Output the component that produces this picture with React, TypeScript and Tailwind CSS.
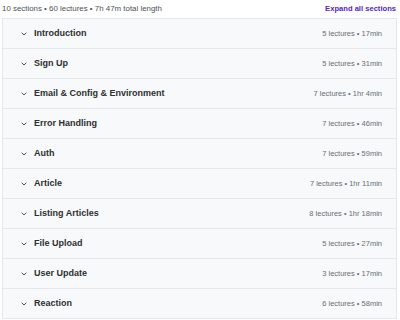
import { ChevronDown } from "lucide-react";

const sections = [
  { title: "Introduction", meta: "5 lectures • 17min" },
  { title: "Sign Up", meta: "5 lectures • 31min" },
  { title: "Email & Config & Environment", meta: "7 lectures • 1hr 4min" },
  { title: "Error Handling", meta: "7 lectures • 46min" },
  { title: "Auth", meta: "7 lectures • 59min" },
  { title: "Article", meta: "7 lectures • 1hr 11min" },
  { title: "Listing Articles", meta: "8 lectures • 1hr 18min" },
  { title: "File Upload", meta: "5 lectures • 27min" },
  { title: "User Update", meta: "3 lectures • 17min" },
  { title: "Reaction", meta: "6 lectures • 58min" },
];

export default function App() {
  return (
    <div
      className="w-[400px] h-[320px] bg-white overflow-hidden"
      style={{ fontFamily: '"Liberation Sans", Arial, sans-serif' }}
    >
      {/* Summary line */}
      <div className="flex items-center justify-between h-[18px] pl-[2px] pr-[4px]">
        <span className="text-[7.9px] text-[#4d5156]">10 sections • 60 lectures • 7h 47m total length</span>
        <button className="text-[7.6px] font-bold text-[#5624d0]">Expand all sections</button>
      </div>

      {/* Accordion */}
      <div className="ml-[2px] w-[395px] border border-[#e4e8eb]">
        {sections.map((s, i) => (
          <div
            key={s.title}
            className={`flex items-center bg-[#f7f9fa] pl-[17px] pr-[14px] ${
              i > 0 ? "h-[30px] border-t border-[#e4e8eb]" : "h-[29px]"
            }`}
          >
            <ChevronDown className="w-[8px] h-[8px] text-[#2d2f31]" strokeWidth={2.5} />
            <span className="ml-[6px] text-[9px] font-bold text-[#2d2f31]">{s.title}</span>
            <span className="ml-auto text-[7.5px] text-[#6a6f73]">{s.meta}</span>
          </div>
        ))}
      </div>
    </div>
  );
}
